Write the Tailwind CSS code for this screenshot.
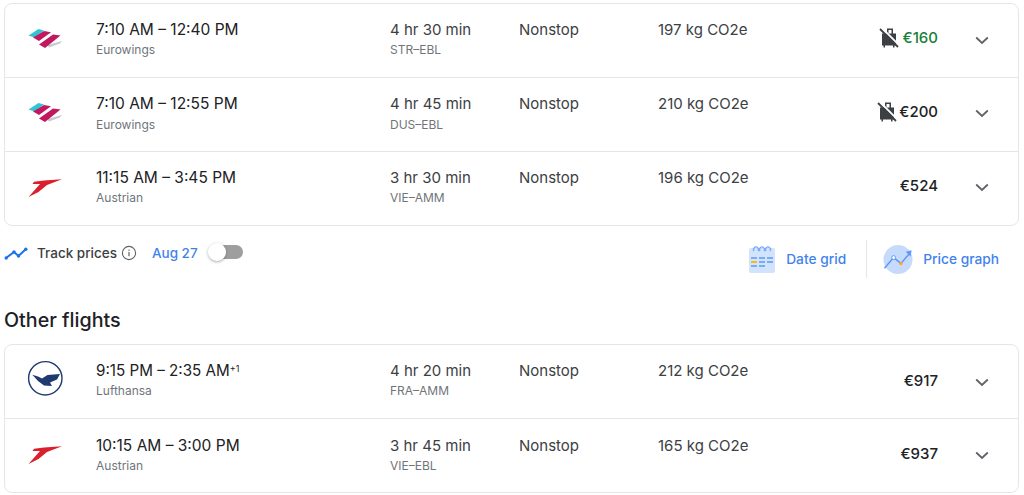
<!DOCTYPE html>
<html lang="en">
<head>
  <meta charset="UTF-8">
  <title>Flights</title>
  <script src="https://cdn.jsdelivr.net/npm/@tailwindcss/browser@4"></script>
</head>
<body class="bg-white text-[#202124] font-['Inter',sans-serif] overflow-hidden">
  <!-- Shared icons -->
  <svg class="hidden">
    <symbol id="eurowings" viewBox="25 20 40 40">
      <polygon points="47,45 62,41 60,43.5 49,47.5" fill="#c8cacc"/>
      <polygon points="28.5,35.5 38.5,29 44,30.5 34.5,37.5" fill="#2fc4d6"/>
      <polygon points="33,37.5 44,31 51,32.3 39,41" fill="#c2185f"/>
      <polygon points="39,44.5 53,34.5 60.5,35.5 45,48" fill="#c2185f"/>
    </symbol>
    <symbol id="austrian" viewBox="25 168 40 40">
      <polygon points="62,179.2 44,180.5 34,181.8 32.5,184 40,184 28.5,197 38.5,192 47,185" fill="#d9202c"/>
    </symbol>
    <symbol id="lufthansa" viewBox="25 359 40 40">
      <circle cx="45.3" cy="379.3" r="16.7" fill="none" stroke="#1f3a6e" stroke-width="1.4"/>
      <path d="M32.3 375.8 L38 377.5 L42 379.5 L47.5 376 L60 375 L57 380.5 L50 383.5 L52 387 L44 386.5 L38 382 Z" fill="#1f3a6e"/>
    </symbol>
    <symbol id="nobag" viewBox="0 0 20 20">
      <path d="M8 0.5h6v5H17v12h-1.5v2H14v-2H6v2H4.5v-2H3v-12h5z M9.5 2v3.5h3V2z" fill="#3c4043"/>
      <path d="M3 0 L20 17" stroke="#fff" stroke-width="1.8"/>
      <path d="M1 1 L19 19" stroke="#3c4043" stroke-width="1.8"/>
    </symbol>
    <symbol id="chevron" viewBox="0 0 14 9">
      <path d="M1.2 1.5 L7 7 L12.8 1.5" fill="none" stroke="#5f6368" stroke-width="1.8"/>
    </symbol>
  </svg>

  <!-- Best flights -->
  <div class="mx-[4px] mt-[3px] w-[1015px] rounded-lg border border-[#e4e6e9] divide-y divide-[#e4e6e9]">
    <div class="flex h-[74px]">
      <div class="w-[91px] shrink-0 pl-[20px] pt-[16px]"><svg class="w-10 h-10"><use href="#eurowings"/></svg></div>
      <div class="w-[294px] shrink-0 pt-[14px]">
        <div class="text-[15.5px] leading-6">7:10 AM – 12:40 PM</div>
        <div class="text-xs leading-4 text-[#70757a]">Eurowings</div>
      </div>
      <div class="w-[129px] shrink-0 pt-[14px]">
        <div class="text-[15px] leading-6 text-[#3c4043]">4 hr 30 min</div>
        <div class="text-xs leading-4 text-[#70757a]">STR–EBL</div>
      </div>
      <div class="w-[139px] shrink-0 pt-[14px] text-[15px] leading-6 text-[#3c4043]">Nonstop</div>
      <div class="w-[160px] shrink-0 pt-[14px] text-[15px] leading-6 text-[#3c4043]">197 kg CO2e</div>
      <div class="w-[120px] shrink-0 flex justify-end items-center gap-[4px] h-[24px] mt-[22px]">
        <svg class="w-5 h-5"><use href="#nobag"/></svg>
        <span class="text-[15px] font-medium text-[#188038]">€160</span>
      </div>
      <div class="w-[81px] flex justify-center pt-[31px] pl-[7px]"><svg class="w-[14px] h-[9px] mt-[1px]"><use href="#chevron"/></svg></div>
    </div>
    <div class="flex h-[74px]">
      <div class="w-[91px] shrink-0 pl-[20px] pt-[16px]"><svg class="w-10 h-10"><use href="#eurowings"/></svg></div>
      <div class="w-[294px] shrink-0 pt-[14px]">
        <div class="text-[15.5px] leading-6">7:10 AM – 12:55 PM</div>
        <div class="text-xs leading-4 text-[#70757a] mt-[1px]">Eurowings</div>
      </div>
      <div class="w-[129px] shrink-0 pt-[14px]">
        <div class="text-[15px] leading-6 text-[#3c4043]">4 hr 45 min</div>
        <div class="text-xs leading-4 text-[#70757a] mt-[1px]">DUS–EBL</div>
      </div>
      <div class="w-[139px] shrink-0 pt-[14px] text-[15px] leading-6 text-[#3c4043]">Nonstop</div>
      <div class="w-[160px] shrink-0 pt-[14px] text-[15px] leading-6 text-[#3c4043]">210 kg CO2e</div>
      <div class="w-[120px] shrink-0 flex justify-end items-center gap-[2px] h-[24px] mt-[22px]">
        <svg class="w-5 h-5"><use href="#nobag"/></svg>
        <span class="text-[15px] font-medium">€200</span>
      </div>
      <div class="w-[81px] flex justify-center pt-[31px] pl-[7px]"><svg class="w-[14px] h-[9px]"><use href="#chevron"/></svg></div>
    </div>
    <div class="flex h-[73px]">
      <div class="w-[91px] shrink-0 pl-[20px] pt-[16px]"><svg class="w-10 h-10"><use href="#austrian"/></svg></div>
      <div class="w-[294px] shrink-0 pt-[14px]">
        <div class="text-[15.5px] leading-6">11:15 AM – 3:45 PM</div>
        <div class="text-xs leading-4 text-[#70757a]">Austrian</div>
      </div>
      <div class="w-[129px] shrink-0 pt-[14px]">
        <div class="text-[15px] leading-6 text-[#3c4043]">3 hr 30 min</div>
        <div class="text-xs leading-4 text-[#70757a]">VIE–AMM</div>
      </div>
      <div class="w-[139px] shrink-0 pt-[14px] text-[15px] leading-6 text-[#3c4043]">Nonstop</div>
      <div class="w-[160px] shrink-0 pt-[14px] text-[15px] leading-6 text-[#3c4043]">196 kg CO2e</div>
      <div class="w-[120px] shrink-0 flex justify-end items-center h-[24px] mt-[22px]">
        <span class="text-[15px] font-medium">€524</span>
      </div>
      <div class="w-[81px] flex justify-center pt-[31px] pl-[7px]"><svg class="w-[14px] h-[9px]"><use href="#chevron"/></svg></div>
    </div>
  </div>

  <!-- Track prices / tools -->
  <div class="flex h-[59px] ml-[4px] w-[1015px]">
    <div class="flex items-center h-[54px] w-[250px]">
      <svg class="w-[24px] h-[24px]" viewBox="0 0 24 24"><path d="M2 17 L10 11 L14.5 15 L22 8" fill="none" stroke="#1a73e8" stroke-width="2"/><circle cx="2.2" cy="17" r="1.7" fill="#1a73e8"/><circle cx="10" cy="11" r="1.7" fill="#1a73e8"/><circle cx="14.5" cy="15" r="1.7" fill="#1a73e8"/><circle cx="21.8" cy="8.2" r="1.7" fill="#1a73e8"/></svg>
      <span class="ml-[9px] text-[13.5px] font-medium text-[#3c4043] whitespace-nowrap">Track prices</span>
      <svg class="ml-[4px] w-[16px] h-[16px] shrink-0" viewBox="0 0 16 16"><circle cx="8" cy="8" r="6.6" fill="none" stroke="#5f6368" stroke-width="1.1"/><rect x="7.4" y="7" width="1.2" height="4.2" fill="#5f6368"/><rect x="7.4" y="4.6" width="1.2" height="1.3" fill="#5f6368"/></svg>
      <span class="ml-[15px] text-[13.5px] font-medium text-[#3f83ee] whitespace-nowrap">Aug 27</span>
      <div class="relative ml-[19px] w-[26px] h-[14px] rounded-full bg-[#9e9e9e] shrink-0 -translate-y-[1px]">
        <div class="absolute -left-[9px] -top-[2px] w-[18px] h-[18px] rounded-full bg-white shadow-[0_1px_3px_rgba(60,64,67,0.45)]"></div>
      </div>
    </div>
    <div class="ml-auto flex items-center h-[66px] pr-[20px]">
      <svg class="w-[28px] h-[28px]" viewBox="0 0 28 28">
        <rect x="1" y="3" width="26" height="25" rx="2" fill="#d2e3fc"/>
        <path d="M6 6a2.5 2.5 0 1 1 4 0M12 6a2.5 2.5 0 1 1 4 0M18 6a2.5 2.5 0 1 1 4 0" fill="none" stroke="#7baaf7" stroke-width="1.3"/>
        <rect x="3" y="12" width="6" height="2" fill="#7baaf7"/><rect x="11" y="12" width="6" height="2" fill="#7baaf7"/><rect x="19" y="12" width="6" height="2" fill="#7baaf7"/>
        <rect x="3" y="16" width="6" height="2" fill="#fbbc04"/><rect x="11" y="16" width="6" height="2" fill="#7baaf7"/><rect x="19" y="16" width="6" height="2" fill="#7baaf7"/>
        <rect x="3" y="20" width="6" height="2" fill="#7baaf7"/><rect x="11" y="20" width="6" height="2" fill="#7baaf7"/>
      </svg>
      <span class="ml-[10px] text-[13.75px] font-medium text-[#3f83ee]">Date grid</span>
      <div class="ml-[20px] w-px h-[38px] bg-[#e4e6e9]"></div>
      <svg class="ml-[16px] w-[31px] h-[31px]" viewBox="0 0 32 32">
        <circle cx="15.5" cy="16" r="15" fill="#c6dafc"/>
        <path d="M1.5 25 L11 14 L18.5 20 L28 9" fill="none" stroke="#5e97f6" stroke-width="1.5"/>
        <path d="M23.5 8 L29.5 6.5 L28.5 13 Z" fill="#5e97f6"/>
        <circle cx="11" cy="14" r="2" fill="#fff" stroke="#5e97f6"/>
        <circle cx="18.5" cy="20" r="1.8" fill="#f6a821"/>
      </svg>
      <span class="ml-[9px] text-[13.75px] font-medium text-[#3f83ee] whitespace-nowrap">Price graph</span>
    </div>
  </div>

  <h2 class="ml-[4px] mt-[23px] text-[19.7px] leading-6 font-medium text-[#202124]">Other flights</h2>

  <!-- Other flights -->
  <div class="mx-[4px] mt-[12px] w-[1015px] rounded-lg border border-[#e4e6e9] divide-y divide-[#e4e6e9]">
    <div class="flex h-[74px]">
      <div class="w-[91px] shrink-0 pl-[20px] pt-[13px]"><svg class="w-10 h-10"><use href="#lufthansa"/></svg></div>
      <div class="w-[294px] shrink-0 pt-[14px]">
        <div class="text-[15.2px] leading-6">9:15 PM – 2:35 AM<sup class="text-[9px]">+1</sup></div>
        <div class="text-xs leading-4 text-[#70757a]">Lufthansa</div>
      </div>
      <div class="w-[129px] shrink-0 pt-[14px]">
        <div class="text-[15px] leading-6 text-[#3c4043]">4 hr 20 min</div>
        <div class="text-xs leading-4 text-[#70757a]">FRA–AMM</div>
      </div>
      <div class="w-[139px] shrink-0 pt-[14px] text-[15px] leading-6 text-[#3c4043]">Nonstop</div>
      <div class="w-[160px] shrink-0 pt-[14px] text-[15px] leading-6 text-[#3c4043]">212 kg CO2e</div>
      <div class="w-[120px] shrink-0 flex justify-end items-center h-[24px] mt-[24px]">
        <span class="text-[15px] font-medium">€917</span>
      </div>
      <div class="w-[81px] flex justify-center pt-[33px] pl-[7px]"><svg class="w-[14px] h-[9px]"><use href="#chevron"/></svg></div>
    </div>
    <div class="flex h-[73px]">
      <div class="w-[91px] shrink-0 pl-[20px] pt-[16px]"><svg class="w-10 h-10"><use href="#austrian"/></svg></div>
      <div class="w-[294px] shrink-0 pt-[15px]">
        <div class="text-[15.5px] leading-6">10:15 AM – 3:00 PM</div>
        <div class="text-xs leading-4 text-[#70757a]">Austrian</div>
      </div>
      <div class="w-[129px] shrink-0 pt-[15px]">
        <div class="text-[15px] leading-6 text-[#3c4043]">3 hr 45 min</div>
        <div class="text-xs leading-4 text-[#70757a]">VIE–EBL</div>
      </div>
      <div class="w-[139px] shrink-0 pt-[15px] text-[15px] leading-6 text-[#3c4043]">Nonstop</div>
      <div class="w-[160px] shrink-0 pt-[15px] text-[15px] leading-6 text-[#3c4043]">165 kg CO2e</div>
      <div class="w-[120px] shrink-0 flex justify-end items-center h-[24px] mt-[23px]">
        <span class="text-[15px] font-medium">€937</span>
      </div>
      <div class="w-[81px] flex justify-center pt-[32px] pl-[7px]"><svg class="w-[14px] h-[9px]"><use href="#chevron"/></svg></div>
    </div>
  </div>
</body>
</html>
